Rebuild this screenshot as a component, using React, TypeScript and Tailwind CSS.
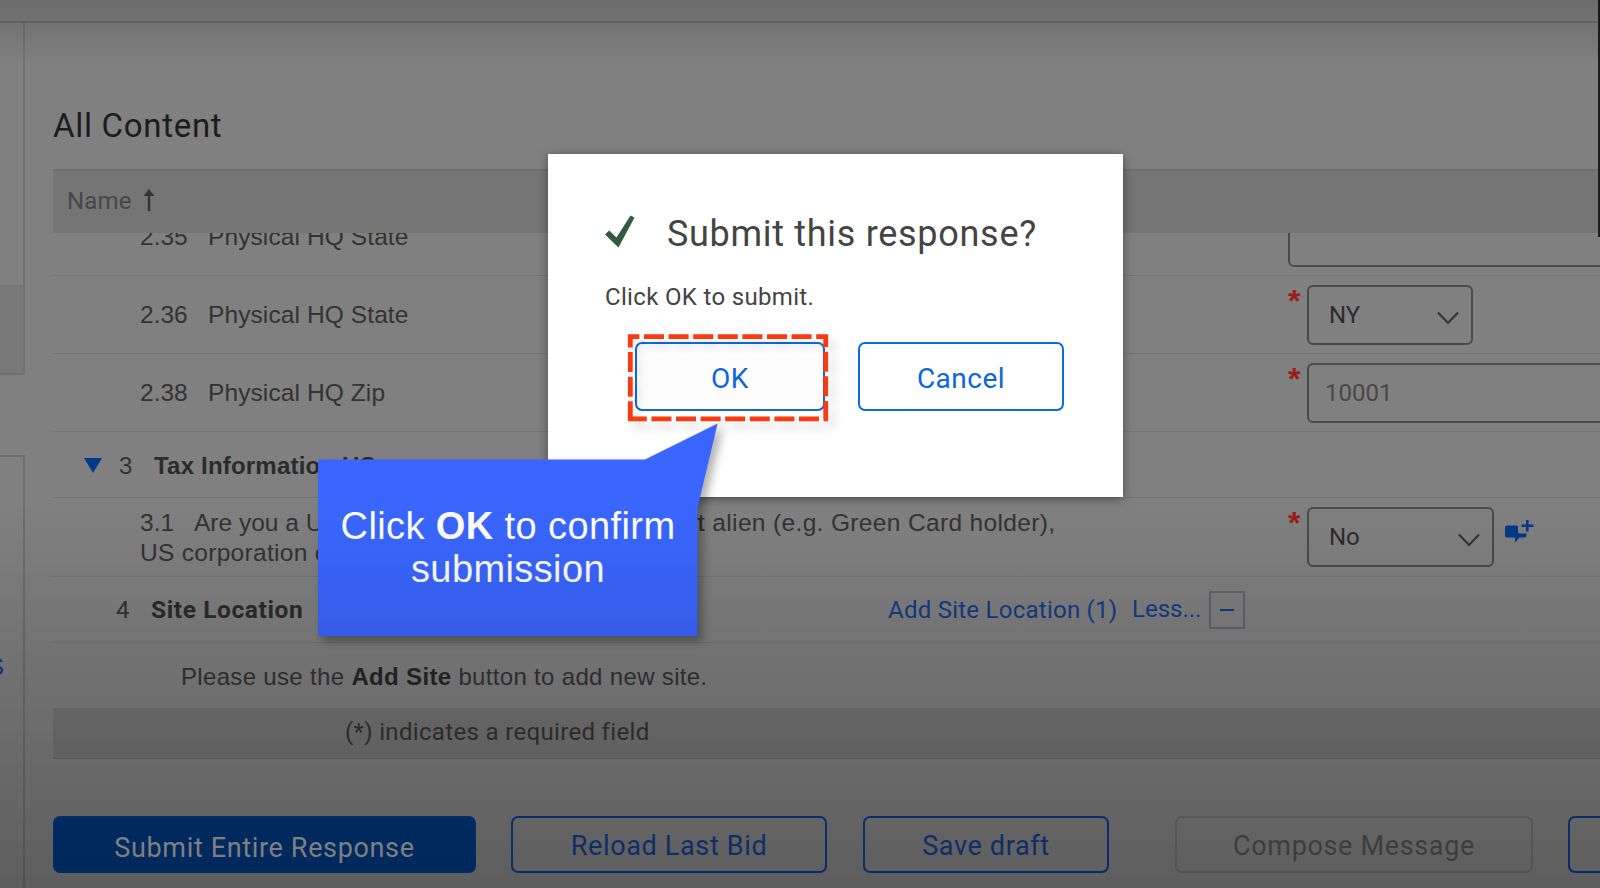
import type { ReactNode } from 'react';

type RowProps = {
  className: string;
  name: ReactNode;
  middle?: ReactNode;
  value?: ReactNode;
};

function Row({ className, name, middle, value }: RowProps) {
  return (
    <div className={`flex shrink-0 items-center whitespace-nowrap border-b border-[#757575] ${className}`}>
      <div className="w-[835px] shrink-0">{name}</div>
      <div className="w-[400px] shrink-0">{middle}</div>
      <div className="flex-1">{value}</div>
    </div>
  );
}

function Question({ id, label }: { id: string; label: string }) {
  return (
    <div className="flex pl-[87px] text-[24.5px] leading-[24px]">
      <span className="w-[68px]">{id}</span>
      <span className="tracking-[0.1px]">{label}</span>
    </div>
  );
}

function Required({ children }: { children: ReactNode }) {
  return (
    <div className="flex h-[60px]">
      <span className="w-[19px] shrink-0 text-[32px] leading-[32px] font-bold text-[#9c1c1c]">*</span>
      {children}
    </div>
  );
}

function SelectBox({ value, className }: { value: string; className: string }) {
  return (
    <div className={`flex h-[60px] shrink-0 items-center justify-between rounded-[6px] border-2 border-[#4b4b4b] pr-[12px] pl-[20px] font-[Roboto,sans-serif] text-[24px] text-[#2c2c2c] ${className}`}>
      <span>{value}</span>
      <svg width="22" height="14" viewBox="0 0 22 14" fill="none" stroke="#333" strokeWidth="2" className="mt-[6px]">
        <path d="M1 1.5 L11 12 L21 1.5" />
      </svg>
    </div>
  );
}

const actionButton = 'flex h-[57px] shrink-0 items-center justify-center rounded-[7px] border-2 pt-[4px] text-[27px]';

export default function App() {
  return (
    <div className="relative flex h-[888px] w-[1600px] flex-col overflow-hidden bg-[#808080] font-['Liberation_Sans',Arial,sans-serif] text-[#333]">
      <div className="h-[23px] shrink-0 border-b-2 border-[#6c6c6c]" />

      <div className="flex min-h-0 flex-1">
        <aside className="flex w-[25px] shrink-0 flex-col">
          <div className="flex h-[352px] shrink-0 flex-col justify-end border-r-2 border-b-2 border-[#717171]">
            <div className="h-[88px] bg-[#787878]" />
          </div>
          <div className="mt-[80px] flex-1 border-t-2 border-r-2 border-[#6d6d6d]">
            <div className="mt-[196px] flex w-[4px] justify-end overflow-hidden text-[24px] leading-[28px] text-[#16309a]">
              <span>S</span>
            </div>
          </div>
        </aside>

        <main className="flex flex-1 flex-col overflow-hidden pl-[28px]">
          <h1 className="h-[146px] shrink-0 pt-[83px] font-[Roboto,sans-serif] text-[33px] leading-[40px] tracking-[0.7px] text-[#1c1c1c]">All Content</h1>

          <div className="flex h-[64px] shrink-0 items-center border-t-2 border-[#707070] bg-[#757575] pb-[2px] pl-[14px] font-[Roboto,sans-serif] text-[24px] text-[#474747]">
            <span className="tracking-[0.2px]">Name</span>
            <svg width="12" height="22" viewBox="0 0 12 22" className="ml-[11px] mb-[3px]">
              <path d="M6 0 L11.5 7 H7.2 V22 H4.8 V7 H0.5 Z" fill="#333" />
            </svg>
          </div>

          {/* first visible row is scrolled halfway under the header */}
          <div className="flex h-[43px] shrink-0 flex-col justify-end overflow-hidden">
            <Row
              className="h-[78px]"
              name={<Question id="2.35" label="Physical HQ State" />}
              value={<div className="h-[60px] w-[340px] rounded-[6px] border-2 border-[#4b4b4b]" />}
            />
          </div>
          <Row
            className="h-[78px]"
            name={<Question id="2.36" label="Physical HQ State" />}
            value={<Required><SelectBox value="NY" className="w-[166px]" /></Required>}
          />
          <Row
            className="h-[78px]"
            name={<Question id="2.38" label="Physical HQ Zip" />}
            value={
              <Required>
                <div className="flex h-[60px] w-[340px] shrink-0 items-center rounded-[6px] border-2 border-[#4b4b4b] pl-[16px] font-[Roboto,sans-serif] text-[24px] text-[#484848]">
                  10001
                </div>
              </Required>
            }
          />
          <Row
            className="h-[66px]"
            name={
              <div className="flex items-center pt-[2px] pl-[31px] text-[24px] leading-[24px]">
                <svg width="18" height="15" viewBox="0 0 18 15">
                  <path d="M0 0 H18 L9 15 Z" fill="#04398a" />
                </svg>
                <span className="ml-[17px] w-[35px]">3</span>
                <b className="tracking-[0.2px] text-[#2b2b2b]">Tax Information US</b>
              </div>
            }
          />
          <Row
            className="h-[79px]"
            name={
              <div className="pt-[1px] pl-[87px] text-[24.5px] leading-[30px]">
                <div className="flex">
                  <span className="w-[54px] shrink-0">3.1</span>
                  <span className="w-[504px] shrink-0">Are you a US citizen, US resident or permanen</span>
                  <span className="tracking-[0.35px]">t alien (e.g. Green Card holder),</span>
                </div>
                <div className="tracking-[0.3px]">US corporation or US entity?</div>
              </div>
            }
            value={
              <div className="flex">
                <Required><SelectBox value="No" className="w-[187px]" /></Required>
                <svg width="29" height="23" viewBox="0 0 29 23" className="mt-[13px] ml-[11px]" fill="#04398a">
                  <path d="M2 5.5 H12 Q13 5.5 13 7 V12 Q13 13.5 14.5 13.5 H21.5 V15.5 Q21.5 17.5 19.5 17.5 H14.5 L10 22.5 V17.5 H2 Q0 17.5 0 15.5 V7.5 Q0 5.5 2 5.5 Z" />
                  <path d="M21 0 H23.6 V4.6 H28.5 V7 H23.6 V11.5 H21 V7 H16.5 V4.6 H21 Z" />
                </svg>
              </div>
            }
          />
          <Row
            className="h-[66px]"
            name={
              <div className="flex pl-[63px] font-[Roboto,sans-serif] text-[24px] leading-[24px]">
                <span className="w-[35px]">4</span>
                <b className="text-[24.5px] tracking-[0.6px] text-[#2b2b2b]">Site Location</b>
              </div>
            }
            middle={
              <div className="flex items-center font-[Roboto,sans-serif] text-[24px] leading-[24px] text-[#123c86]">
                <span className="w-[244px] tracking-[0.25px]">Add Site Location (1)</span>
                <span className="w-[77px] pb-[2px]">Less...</span>
                <span className="flex h-[38px] w-[36px] items-center justify-center border-2 border-[#62646c]">
                  <span className="h-[2px] w-[14px] bg-[#0c3a8c]" />
                </span>
              </div>
            }
          />
          <div className="flex h-[65px] shrink-0 items-center pt-[2px] pl-[128px] text-[24px] tracking-[0.33px]">
            <span>
              Please use the <b className="text-[#262626]">Add Site</b> button to add new site.
            </span>
          </div>
          <div className="flex h-[51px] shrink-0 items-center border-b border-[#6c6c6c] bg-[#757575] pb-[3px] pl-[292px] font-[Roboto,sans-serif] text-[24px] tracking-[0.33px]">
            (*) indicates a required field
          </div>

          <div className="mt-[57px] flex shrink-0 items-center font-[Roboto,sans-serif] tracking-[0.65px]">
            <button className={`${actionButton} w-[423px] border-[#003a86] bg-[#00367b] text-[#a8a8a8]`}>
              <span className="pt-[3px]">Submit Entire Response</span>
            </button>
            <button className={`${actionButton} ml-[35px] w-[316px] border-[#0c3a8c] text-[#123c86]`}>Reload Last Bid</button>
            <button className={`${actionButton} ml-[36px] w-[246px] border-[#0c3a8c] text-[#123c86]`}>Save draft</button>
            <span className="ml-[36px] h-[28px] w-[1px] bg-[#666]" />
            <button className={`${actionButton} ml-[30px] w-[358px] border-[#707070] text-[#505050]`}>Compose Message</button>
            <button className={`${actionButton} ml-[35px] w-[240px] border-[#0c3a8c]`} />
          </div>
        </main>
      </div>

      <div className="absolute top-0 right-0 h-[237px] w-[2px] bg-[#1c1c1c]" />

      <div className="absolute top-[154px] left-[548px] h-[343px] w-[575px] bg-white pt-[59px] pl-[57px] font-[Roboto,sans-serif] text-[#444] shadow-[0_2px_10px_rgba(0,0,0,0.4)]">
        <div className="flex h-[40px] items-center">
          <svg width="30" height="33" viewBox="0 0 30 33" className="mb-[4px]">
            <path d="M0 19.5 L4.2 15.5 L11.5 22.5 L25.5 0.5 L29.5 2.5 L13.5 32.5 Z" fill="#33593f" />
          </svg>
          <h2 className="mt-[1px] ml-[32px] text-[36px] leading-[40px] tracking-[0.7px]">Submit this response?</h2>
        </div>
        <p className="mt-[30px] text-[24px] leading-[28px] tracking-[0.33px]">Click OK to submit.</p>
        <div className="mt-[31px] ml-[30px] flex gap-[33px] text-[28px] tracking-[0.5px] text-[#0a66dc]">
          <button className="h-[69px] w-[190px] rounded-[7px] border-2 border-[#0a6be0] bg-[#fdfdfd] pt-[5px]">OK</button>
          <button className="h-[69px] w-[206px] rounded-[7px] border-2 border-[#0a6be0] pt-[5px]">Cancel</button>
        </div>
      </div>

      <svg className="absolute top-0 left-0 drop-shadow-[6px_7px_5px_rgba(0,0,0,0.14)]" width="1600" height="888" viewBox="0 0 1600 888">
        <path d="M630.3 421.3 V336.6 H825.7 V418.8 H632" fill="none" stroke="#fb3a12" strokeWidth="4.8" strokeDasharray="20 4.6" />
      </svg>
      <svg className="absolute top-0 left-0 drop-shadow-[5px_6px_4px_rgba(0,0,0,0.3)]" width="1600" height="888" viewBox="0 0 1600 888">
        <path d="M318 459.5 H645 L717.6 423.5 L697.5 508 V636 H318 Z" fill="#3a66ff" />
      </svg>
      <div className="absolute top-[505px] left-[318px] w-[380px] text-center text-[38px] leading-[43px] tracking-[0.4px] text-white">
        Click <b>OK</b> to confirm
        <br />
        submission
      </div>

      {/* player vignette */}
      <div className="absolute inset-x-0 top-0 h-[66px] bg-linear-to-b from-black/16 to-transparent" />
      <div className="absolute inset-x-0 bottom-0 h-[388px] bg-linear-to-b from-transparent to-black/27" />
    </div>
  );
}
